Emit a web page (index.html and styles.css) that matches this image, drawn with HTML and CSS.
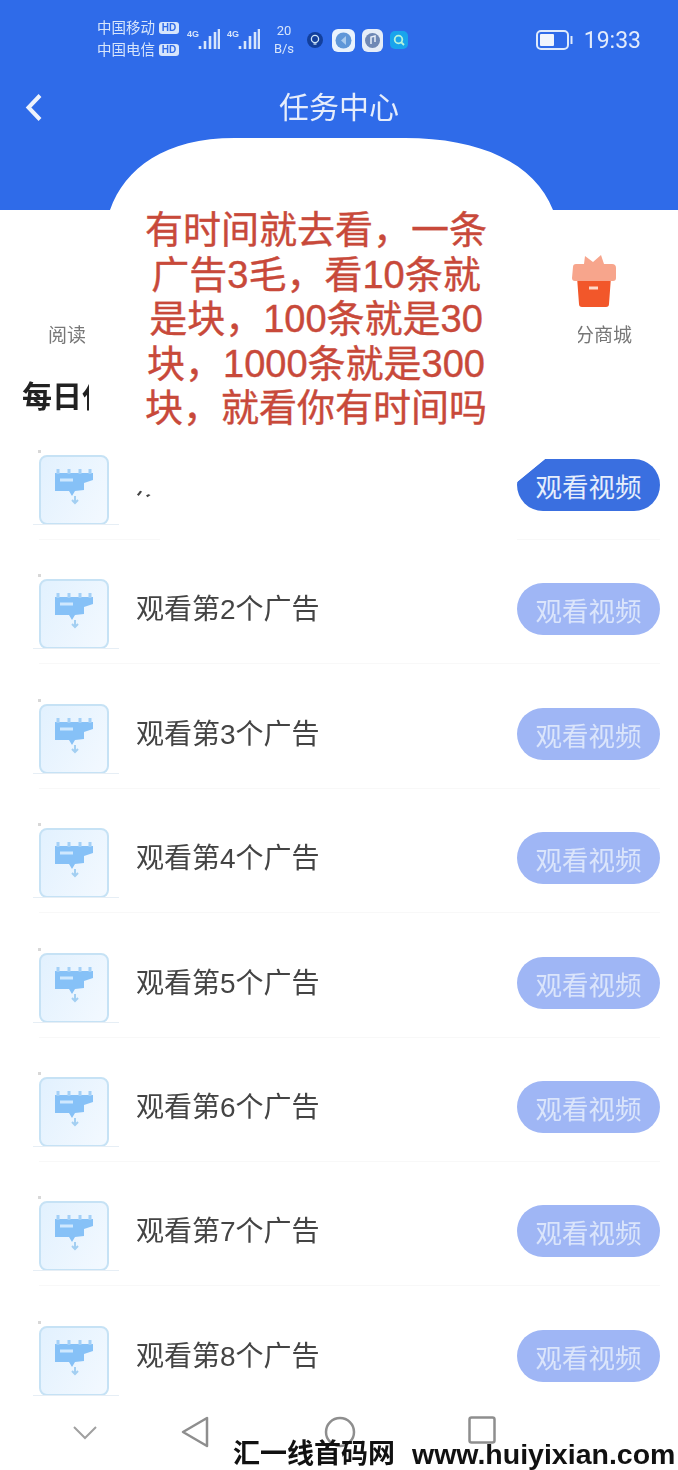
FILE: index.html
```html
<!DOCTYPE html>
<html lang="zh-CN">
<head>
  <meta charset="UTF-8">
  <title>任务中心</title>
  <link rel="stylesheet" href="styles.css">
</head>
<body>

  <svg class="defs" width="0" height="0">
    <symbol id="flag" viewBox="0 0 70 70">
      <path d="M16 18h38v7l-9 3v7l-9 1-3 5-3-5H16z" fill="#86c1f7"/>
      <path d="M19 14v5M30 14v5M41 14v5M51 14v5" stroke="#a3d0f7" stroke-width="3"/>
      <path d="M21 25h13" stroke="#cfe8fe" stroke-width="3"/>
      <path d="M36 41v6M33 45l3 3 3-3" fill="none" stroke="#a3cff2" stroke-width="2"/>
    </symbol>
  </svg>

  <div class="screen">
    <header class="top">
      <div class="status">
        <div class="carriers">
          <div class="carrier"><span>中国移动</span><b>HD</b></div>
          <div class="carrier"><span>中国电信</span><b>HD</b></div>
        </div>
        <svg class="signal" width="33" height="24" viewBox="0 0 33 24">
          <text x="0" y="9" class="net">4G</text>
          <path d="M13 21v-3M18 21v-8M23 21V8M28 21V4M32 21V1" stroke="#d7e5fb" stroke-width="2.600" fill="none"/>
        </svg>
        <svg class="signal" width="33" height="24" viewBox="0 0 33 24">
          <text x="0" y="9" class="net">4G</text>
          <path d="M13 21v-3M18 21v-8M23 21V8M28 21V4M32 21V1" stroke="#d7e5fb" stroke-width="2.600" fill="none"/>
        </svg>
        <div class="speed">20<br>B/s</div>
        <svg class="bulb" width="16" height="16" viewBox="0 0 16 16">
          <circle cx="8" cy="8" r="8" fill="#123f9c"/>
          <circle cx="8" cy="7" r="3.600" fill="none" stroke="#cfe6f8" stroke-width="1.300"/>
          <path d="M6.500 12h3" stroke="#cfe6f8" stroke-width="1.300"/>
        </svg>
        <svg class="app" width="23" height="23" viewBox="0 0 23 23">
          <rect width="23" height="23" rx="6" fill="#eaf3fd"/>
          <circle cx="11.500" cy="11.500" r="8" fill="#5f97d8"/>
          <path d="M14 7l-5 4.500 5 4.500z" fill="#a9cbee"/>
        </svg>
        <svg class="app" width="21" height="23" viewBox="0 0 21 23">
          <rect width="21" height="23" rx="6" fill="#e6edf8"/>
          <circle cx="10.500" cy="11.500" r="7.500" fill="#6f88b5"/>
          <path d="M9 15V8l4-1v6" fill="none" stroke="#e6edf8" stroke-width="1.500"/>
        </svg>
        <svg class="app" width="18" height="18" viewBox="0 0 18 18">
          <rect width="18" height="18" rx="5" fill="#19a4ec"/>
          <circle cx="8.500" cy="8.500" r="3.800" fill="none" stroke="#b6f3dc" stroke-width="1.800"/>
          <path d="M11 11l3 3" stroke="#b6f3dc" stroke-width="1.800"/>
        </svg>
        <div class="clock">
          <svg width="37" height="20" viewBox="0 0 37 20">
            <rect x="1" y="1" width="31" height="18" rx="4" fill="none" stroke="#dfeafb" stroke-width="2"/>
            <rect x="4" y="4" width="14" height="12" rx="1" fill="#f0f5fd"/>
            <path d="M35.500 6v8" stroke="#dfeafb" stroke-width="2"/>
          </svg>
          <span>19:33</span>
        </div>
      </div>
      <div class="titlebar">
        <svg class="back" width="18" height="29" viewBox="0 0 18 29">
          <path d="M15 2.500L3.500 14.500 15 26.500" fill="none" stroke="#eef3fc" stroke-width="4"/>
        </svg>
        <h1>任务中心</h1>
      </div>
    </header>

    <main class="content">
      <section class="tabs">
        <div class="tab">
          <div class="tab-icon"></div>
          <span>阅读</span>
        </div>
        <div class="tab">
          <svg class="tab-icon" width="46" height="52" viewBox="0 0 46 52">
            <path d="M6 22h34l-2 27q0 3-3 3H11q-3 0-3-3z" fill="#f2572a"/>
            <path d="M2 12q0-3 3-3h8l1-8 8 6 8-7 3 9h8q4 0 4 4v10q0 3-3 3H4q-3 0-3-3z" fill="#f7a58c"/>
            <path d="M18 33h9" stroke="#ffd9c8" stroke-width="3"/>
          </svg>
          <span>积分商城</span>
        </div>
      </section>

      <h2>每日任务</h2>

      <ul class="tasks">
        <li class="task">
          <div class="thumb"><svg width="70" height="70"><use href="#flag"/></svg></div>
          <span class="label">观看第1个广告</span>
          <button class="watch active">观看视频</button>
        </li>
        <li class="task">
          <div class="thumb"><svg width="70" height="70"><use href="#flag"/></svg></div>
          <span class="label">观看第2个广告</span>
          <button class="watch">观看视频</button>
        </li>
        <li class="task">
          <div class="thumb"><svg width="70" height="70"><use href="#flag"/></svg></div>
          <span class="label">观看第3个广告</span>
          <button class="watch">观看视频</button>
        </li>
        <li class="task">
          <div class="thumb"><svg width="70" height="70"><use href="#flag"/></svg></div>
          <span class="label">观看第4个广告</span>
          <button class="watch">观看视频</button>
        </li>
        <li class="task">
          <div class="thumb"><svg width="70" height="70"><use href="#flag"/></svg></div>
          <span class="label">观看第5个广告</span>
          <button class="watch">观看视频</button>
        </li>
        <li class="task">
          <div class="thumb"><svg width="70" height="70"><use href="#flag"/></svg></div>
          <span class="label">观看第6个广告</span>
          <button class="watch">观看视频</button>
        </li>
        <li class="task">
          <div class="thumb"><svg width="70" height="70"><use href="#flag"/></svg></div>
          <span class="label">观看第7个广告</span>
          <button class="watch">观看视频</button>
        </li>
        <li class="task">
          <div class="thumb"><svg width="70" height="70"><use href="#flag"/></svg></div>
          <span class="label">观看第8个广告</span>
          <button class="watch">观看视频</button>
        </li>
      </ul>
    </main>

    <nav class="navbar">
      <svg width="26" height="16" viewBox="0 0 26 16"><path d="M2 2l11 11L24 2" fill="none" stroke="#a0a0a0" stroke-width="2"/></svg>
      <svg width="28" height="32" viewBox="0 0 28 32"><path d="M26 2v28L2 16z" fill="none" stroke="#8e8e8e" stroke-width="2.500" stroke-linejoin="round"/></svg>
      <svg width="32" height="32" viewBox="0 0 32 32"><circle cx="16" cy="16" r="14" fill="none" stroke="#8e8e8e" stroke-width="2.500"/></svg>
      <svg width="28" height="28" viewBox="0 0 28 28"><rect x="1.500" y="1.500" width="25" height="25" rx="2" fill="none" stroke="#8e8e8e" stroke-width="2.500"/></svg>
    </nav>
  </div>

  <!-- white paper pasted over the page, with the note on it -->
  <div class="note">
    <p>有时间就去看，一条<br>广告3毛，看10条就<br>是块，100条就是30<br>块，1000条就是300<br>块，就看你有时间吗</p>
  </div>

  <div class="watermark"><span>汇一线首码网</span><span>www.huiyixian.com</span></div>

</body>
</html>
```

FILE: styles.css
```css
* {
  box-sizing: border-box;
}

html, body {
  margin: 0;
  height: 100%;
}

body {
  position: relative;
  width: 678px;
  height: 1470px;
  overflow: hidden;
  background-color: #fff;
  font-family: "Liberation Sans", "Noto Sans CJK SC", sans-serif;
}

.defs {
  display: block;
}

.screen {
  display: flex;
  flex-direction: column;
  height: 1470px;
}

/* the shot is a soft re-upload, so everything but the blue ground is a little blurred */
.status, .titlebar, .content, .navbar {
  filter: blur(0.7px);
}

/* header */
.top {
  flex: none;
  height: 210px;
  padding-top: 19px;
  background-color: #2f6be9;
}

.status {
  display: flex;
  align-items: center;
  height: 42px;
  padding: 0 37px 0 97px;
  color: #d7e5fb;
}

.carriers {
  width: 82px;
  margin: -2px 8px 0 0;
}

.carrier {
  display: flex;
  align-items: center;
  justify-content: space-between;
  height: 22px;
  font-size: 14.500px;
  line-height: 22px;
}

.carrier b {
  width: 20px;
  height: 12px;
  border-radius: 3px;
  background-color: #d7e5fb;
  color: #2f6be9;
  font-size: 10px;
  line-height: 12px;
  text-align: center;
}

.signal {
  flex: none;
  margin-right: 7px;
}

.net {
  fill: #d7e5fb;
  font-size: 9px;
  font-weight: bold;
}

.speed {
  width: 24px;
  margin: 0 11px 0 5px;
  font-family: "Roboto", sans-serif;
  font-size: 13px;
  line-height: 18px;
  text-align: center;
}

.bulb {
  flex: none;
  margin-right: 9px;
}

.app {
  flex: none;
  margin-right: 7px;
}

.clock {
  display: flex;
  align-items: center;
  gap: 11px;
  margin-left: auto;
  color: #e2ebfb;
  font-family: "Roboto", sans-serif;
  font-size: 23px;
}

.titlebar {
  display: grid;
  grid-template-columns: 1fr auto 1fr;
  align-items: center;
  height: 50px;
  margin-top: 20px;
  padding-left: 25px;
}

.titlebar h1 {
  grid-column: 2;
  margin: 2px 0 0 -25px;
  color: #e6edfb;
  font-size: 30px;
  font-weight: 400;
  line-height: 50px;
}

.back {
  grid-column: 1;
  grid-row: 1;
}

/* page body */
.content {
  flex: 1;
  min-height: 0;
  overflow: hidden;
}

.tabs {
  display: flex;
  justify-content: space-between;
  padding: 45px 46px 0 29px;
}

.tab {
  display: flex;
  flex-direction: column;
  align-items: center;
  width: 76px;
  color: #777;
  font-size: 19px;
  line-height: 24px;
}

.tab-icon {
  display: block;
  height: 52px;
  margin-bottom: 17px;
}

.content h2 {
  margin: 29px 0 38px 22px;
  color: #222;
  font-size: 30px;
  font-weight: 700;
  line-height: 40px;
}

.tasks {
  margin: 0;
  padding: 0;
  list-style: none;
}

.task {
  display: flex;
  align-items: flex-start;
  height: 85px;
  margin: 0 18px 39.400px 39px;
  border-bottom: 1px solid #f8f8f8;
}

.thumb {
  position: relative;
  flex: none;
  width: 70px;
  height: 70px;
  border: 2px solid #c6e2f5;
  border-radius: 8px;
  background: linear-gradient(120deg, #e2f1fe, #f3f9ff);
}

.thumb svg {
  display: block;
  margin: -2px;
}

.thumb::before {
  content: "";
  position: absolute;
  top: -7px;
  left: -3px;
  width: 3px;
  height: 3px;
  background-color: #d8d8d8;
}

.thumb::after {
  content: "";
  position: absolute;
  right: -12px;
  bottom: -2px;
  left: -8px;
  height: 1px;
  background-color: #e6eef5;
}

.label {
  margin: 11px 0 0 27px;
  color: #444;
  font-size: 28px;
  line-height: 40px;
  white-space: nowrap;
}

.watch {
  width: 143px;
  height: 52px;
  margin: 4px 0 0 auto;
  padding: 6px 0 0;
  border: 0;
  border-radius: 26px;
  background-color: #9fb6f5;
  color: #dbe5fb;
  font-family: inherit;
  font-size: 26.500px;
  line-height: 44px;
}

.watch.active {
  background-color: #3a6fe0;
  color: #e6eefc;
  clip-path: polygon(0 23px, 28px 0, 100% 0, 100% 100%, 0 100%);
}

.navbar {
  flex: none;
  display: flex;
  align-items: flex-start;
  height: 70px;
  padding: 16px 0 0 72px;
}

.navbar svg:nth-child(1) {
  margin: 9px 83px 0 0;
}

.navbar svg:nth-child(2) {
  margin-right: 115px;
}

.navbar svg:nth-child(3) {
  margin-right: 112px;
}

/* overlays */
.note {
  position: absolute;
  top: 138px;
  left: 0;
  width: 678px;
  height: 402px;
  padding: 70px 0 0 136px;
  background-color: #fff;
  clip-path: path("M110 72C125 30 165 0 235 0L405 0C480 0 535 25 553 72L570 72L570 175L578 180L578 207L545 321L517 344L517 402L160 402L160 361L136 351L120 351L120 302L89 292L89 72Z");
}

.note p {
  width: 360px;
  margin: 0;
  color: #c8493a;
  font-size: 38px;
  line-height: 44.500px;
  text-align: center;
  white-space: nowrap;
  -webkit-text-stroke: 0.4px #c8493a;
}

.watermark {
  position: absolute;
  top: 1439px;
  left: 233px;
  display: flex;
  gap: 17px;
  color: #111;
  font-weight: 700;
  line-height: 30px;
  white-space: nowrap;
}

.watermark span:first-child {
  font-size: 27px;
}

.watermark span:last-child {
  font-size: 28.500px;
}
```
